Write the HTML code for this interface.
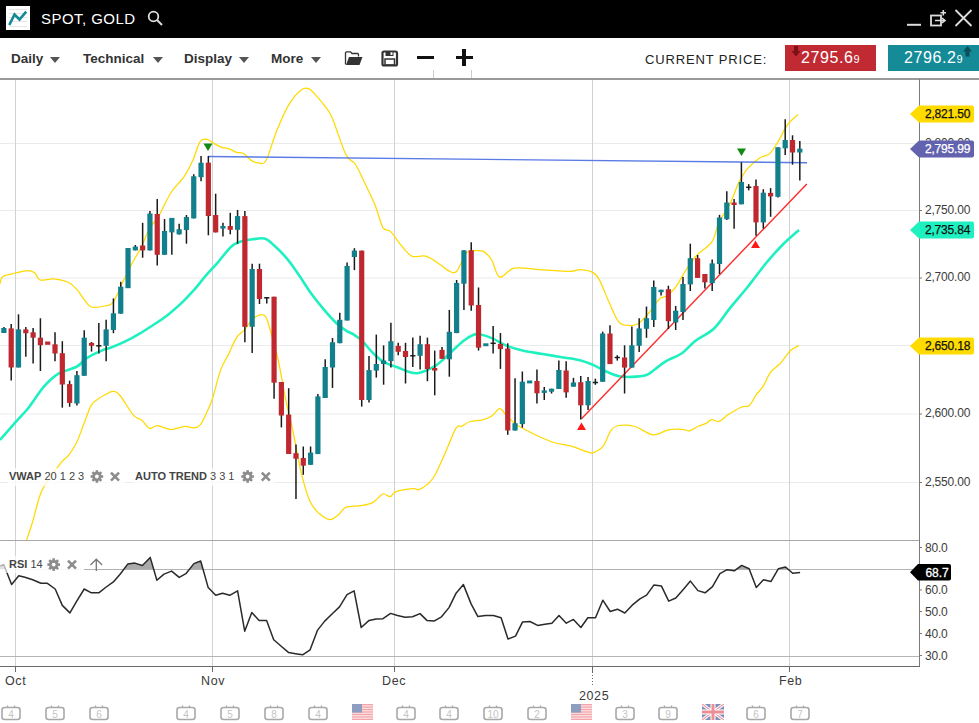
<!DOCTYPE html>
<html><head><meta charset="utf-8">
<style>
html,body{margin:0;padding:0;}
body{width:979px;height:723px;overflow:hidden;position:relative;background:#fff;font-family:"Liberation Sans", sans-serif;}
#title{position:absolute;left:0;top:0;width:979px;height:37.6px;background:#000;}
#logo{position:absolute;left:6px;top:6px;width:24px;height:24px;background:#fff;}
#ttl{position:absolute;left:41px;top:11px;color:#fff;font-size:15px;letter-spacing:0.45px;line-height:16px;white-space:nowrap;}
.tb{position:absolute;top:50px;font-size:13.5px;font-weight:bold;color:#333;line-height:18px;white-space:nowrap;}
.tri{position:absolute;top:56.5px;width:0;height:0;border-left:5.5px solid transparent;border-right:5.5px solid transparent;border-top:6px solid #555;}
#cp{position:absolute;left:645px;top:52px;font-size:13px;letter-spacing:0.85px;color:#222;line-height:16px;white-space:nowrap;}
.pbox{position:absolute;top:45px;height:26px;}
.ptxt{position:absolute;top:48px;font-size:16px;letter-spacing:0.6px;color:#fff;line-height:20px;white-space:nowrap;}
.al{position:absolute;left:925px;font-size:12px;letter-spacing:-0.2px;color:#3c3c3c;line-height:14px;white-space:nowrap;}
.tag{position:absolute;left:910px;}
.tagt{position:absolute;left:925px;font-size:12px;letter-spacing:-0.2px;line-height:16px;-webkit-text-stroke:0.25px currentColor;white-space:nowrap;}
.cal,.flag{position:absolute;}
.dl{position:absolute;top:673px;font-size:12.5px;letter-spacing:0.6px;color:#3a3a3a;line-height:16px;white-space:nowrap;}
.lbl{position:absolute;font-size:11px;color:#444;line-height:14px;white-space:nowrap;}
</style></head><body>
<div id="title">
  <div id="logo"><svg width="24" height="24"><g stroke="#e6e6e6" stroke-width="1"><line x1="3" y1="3.5" x2="21" y2="3.5"/><line x1="3" y1="7.5" x2="21" y2="7.5"/><line x1="3" y1="11.5" x2="21" y2="11.5"/><line x1="3" y1="15.5" x2="21" y2="15.5"/><line x1="3" y1="20.5" x2="21" y2="20.5"/></g><polyline points="3.3,19 8.5,8.5 13.5,13.5 20.2,5.6" fill="none" stroke="#138a96" stroke-width="2.6"/></svg></div>
  <div id="ttl">SPOT, GOLD</div>
  <svg style="position:absolute;left:147px;top:10px" width="17" height="17"><circle cx="6.5" cy="6.5" r="4.8" fill="none" stroke="#ddd" stroke-width="1.8"/><line x1="10" y1="10" x2="15" y2="15" stroke="#ddd" stroke-width="2"/></svg>
  <svg style="position:absolute;left:900px;top:5px" width="79" height="27"><line x1="7" y1="19.8" x2="21" y2="19.8" stroke="#ddd" stroke-width="2"/><rect x="31" y="10.5" width="10" height="10" fill="none" stroke="#ddd" stroke-width="1.8"/><path d="M35,15.5 H44 M42,13 L45,15.5 L42,18" fill="none" stroke="#ddd" stroke-width="1.6"/><path d="M43.3,5 V10.5 M40.5,7.7 H46" stroke="#ddd" stroke-width="1.6"/><path d="M55.5,5 L71.5,21 M71.5,5 L55.5,21" stroke="#ddd" stroke-width="1.8"/></svg>
</div>
<div class="tb" style="left:11px">Daily</div><div class="tri" style="left:50px"></div>
<div class="tb" style="left:83px">Technical</div><div class="tri" style="left:153px"></div>
<div class="tb" style="left:184px">Display</div><div class="tri" style="left:239px"></div>
<div class="tb" style="left:271px">More</div><div class="tri" style="left:311px"></div>
<svg style="position:absolute;left:344px;top:50px" width="20" height="17"><path d="M1.5,14.5 L1.5,3 Q1.5,1.8 2.7,1.8 L6.5,1.8 L8,3.5 L13.5,3.5 Q14.5,3.5 14.5,4.5 L14.5,6.5" fill="none" stroke="#333" stroke-width="1.3"/><path d="M2,15 L5,7 L18.5,7 L15.5,15 Z" fill="#333"/></svg>
<svg style="position:absolute;left:381px;top:50px" width="18" height="17"><rect x="1.5" y="1.5" width="14.5" height="14" rx="1.5" fill="none" stroke="#333" stroke-width="2.2"/><rect x="4.5" y="1.5" width="8" height="4.5" fill="#333"/><rect x="9.5" y="2.3" width="2" height="2.6" fill="#fff"/><rect x="4" y="9" width="9.5" height="6" fill="none" stroke="#333" stroke-width="1.5"/></svg>
<div style="position:absolute;left:417px;top:55.5px;width:16.5px;height:3.8px;background:#111"></div>
<div style="position:absolute;left:456px;top:55.5px;width:16.5px;height:3.8px;background:#111"></div>
<div style="position:absolute;left:462.3px;top:49px;width:3.8px;height:16.8px;background:#111"></div>
<div id="cp">CURRENT PRICE:</div>
<div class="pbox" style="left:785px;width:91px;background:#c12a33"></div>
<svg style="position:absolute;left:791px;top:46px" width="10" height="11"><path d="M3,0 H7 V5 H9.5 L5,10.5 L0.5,5 H3 Z" fill="#7d1016"/></svg>
<div class="ptxt" style="left:801px">2795.6<span style="font-size:11px">9</span></div>
<div class="pbox" style="left:888px;width:91px;background:#148b97"></div>
<svg style="position:absolute;left:962px;top:46px" width="11" height="11"><path d="M3.5,10.5 H7.5 V5.5 H10 L5.5,0 L1,5.5 H3.5 Z" fill="#0a5058"/></svg>
<div class="ptxt" style="left:904px">2796.2<span style="font-size:11px">9</span></div>
<div style="position:absolute;left:433px;top:70px;width:1px;height:8px;background:#ccc"></div>
<div style="position:absolute;left:471px;top:70px;width:1px;height:8px;background:#ccc"></div>
<svg style="position:absolute;left:0;top:0" width="979" height="723">
<defs><clipPath id="mainclip"><rect x="0" y="79" width="919" height="461"/></clipPath></defs>
<line x1="0" y1="143.5" x2="919" y2="143.5" stroke="#ebebeb" stroke-width="1"/>
<line x1="0" y1="210.5" x2="919" y2="210.5" stroke="#ebebeb" stroke-width="1"/>
<line x1="0" y1="278" x2="919" y2="278" stroke="#ebebeb" stroke-width="1"/>
<line x1="0" y1="345.5" x2="919" y2="345.5" stroke="#ebebeb" stroke-width="1"/>
<line x1="0" y1="414" x2="919" y2="414" stroke="#ebebeb" stroke-width="1"/>
<line x1="0" y1="482.5" x2="919" y2="482.5" stroke="#ebebeb" stroke-width="1"/>
<line x1="15.5" y1="79" x2="15.5" y2="666" stroke="#d2d2d2" stroke-width="1"/>
<line x1="212.5" y1="79" x2="212.5" y2="666" stroke="#d2d2d2" stroke-width="1"/>
<line x1="394.5" y1="79" x2="394.5" y2="666" stroke="#d2d2d2" stroke-width="1"/>
<line x1="592.5" y1="79" x2="592.5" y2="666" stroke="#d2d2d2" stroke-width="1"/>
<line x1="789.5" y1="79" x2="789.5" y2="666" stroke="#d2d2d2" stroke-width="1"/>
<g clip-path="url(#mainclip)">
<path d="M0.0,283.7 C0.5,282.5 0.2,278.3 2.9,276.5 C5.6,274.7 11.9,274.0 16.0,273.0 C20.1,272.0 24.5,270.7 27.6,270.7 C30.8,270.7 32.8,271.4 34.9,273.0 C37.0,274.6 36.9,279.0 40.0,280.0 C43.1,281.0 49.0,278.4 53.7,278.8 C58.4,279.2 64.4,280.5 68.3,282.3 C72.2,284.1 74.3,286.7 77.0,289.6 C79.7,292.5 81.9,296.8 84.3,299.7 C86.7,302.6 88.1,305.9 91.5,307.0 C94.9,308.1 101.0,306.8 104.6,306.0 C108.2,305.2 110.1,306.3 113.3,302.0 C116.5,297.7 120.4,286.7 123.5,280.4 C126.6,274.1 128.8,269.5 131.7,264.0 C134.6,258.5 138.1,253.4 141.1,247.5 C144.1,241.6 146.4,234.0 149.4,228.7 C152.4,223.4 155.3,221.7 158.8,215.8 C162.3,209.9 166.2,200.2 170.5,193.5 C174.8,186.8 180.9,181.3 184.6,175.8 C188.3,170.3 190.2,166.3 192.8,160.6 C195.4,154.9 197.6,145.3 199.9,141.8 C202.2,138.3 204.4,139.0 206.9,139.4 C209.4,139.8 212.6,142.7 215.2,144.1 C217.8,145.5 219.8,146.8 222.2,147.6 C224.5,148.4 227.0,148.0 229.3,148.8 C231.7,149.6 234.0,151.5 236.3,152.3 C238.7,153.1 240.9,152.1 243.4,153.5 C245.9,154.9 249.1,159.0 251.6,160.6 C254.1,162.2 256.2,162.9 258.6,162.9 C261.0,162.9 263.1,165.8 266.1,160.3 C269.2,154.9 273.0,139.6 276.9,130.2 C280.8,120.8 285.1,110.8 289.2,104.1 C293.3,97.3 298.2,92.2 301.5,89.7 C304.8,87.2 306.6,87.7 309.2,88.8 C311.8,89.9 314.2,93.6 316.8,96.4 C319.4,99.2 321.9,102.0 324.5,105.6 C327.1,109.2 328.6,109.7 332.2,117.9 C335.8,126.1 342.2,147.1 346.0,154.8 C349.8,162.5 352.1,159.4 355.2,164.0 C358.3,168.6 361.2,175.6 364.5,182.5 C367.8,189.4 372.1,198.0 375.2,205.5 C378.3,213.0 380.3,223.2 382.9,227.6 C385.5,231.9 387.5,228.6 390.6,231.6 C393.7,234.6 397.7,241.3 401.3,245.4 C404.9,249.5 408.0,254.4 412.1,256.2 C416.2,258.0 421.0,254.7 425.9,256.2 C430.8,257.7 437.5,262.9 441.3,265.4 C445.1,267.8 446.3,269.9 448.9,270.9 C451.4,271.9 453.7,274.5 456.6,271.5 C459.5,268.5 463.2,256.4 466.4,252.9 C469.6,249.4 473.0,250.9 475.9,250.7 C478.8,250.5 481.1,250.0 483.8,251.6 C486.5,253.2 489.2,255.9 491.8,260.2 C494.4,264.4 496.0,275.8 499.7,277.1 C503.4,278.4 507.5,269.4 514.1,268.2 C520.7,267.0 532.6,269.3 539.5,269.7 C546.4,270.1 550.1,270.4 555.4,270.7 C560.7,271.0 567.1,271.5 571.3,271.3 C575.5,271.1 577.1,269.4 580.8,269.7 C584.5,270.0 590.3,271.0 593.5,272.9 C596.7,274.8 597.2,275.9 599.9,280.9 C602.5,285.9 606.2,296.2 609.4,303.1 C612.6,310.0 615.8,318.5 619.0,322.2 C622.2,325.9 625.3,325.1 628.5,325.4 C631.7,325.7 634.8,325.6 638.0,323.8 C641.2,322.0 644.9,317.2 647.6,314.3 C650.3,311.4 651.9,309.0 654.0,306.3 C656.1,303.6 657.8,300.1 660.0,298.4 C662.2,296.6 664.4,297.7 667.0,295.8 C669.6,293.9 672.6,291.3 675.9,286.8 C679.2,282.3 683.1,274.3 686.7,268.9 C690.3,263.5 693.3,259.0 697.5,254.5 C701.7,250.0 708.3,247.3 711.9,241.9 C715.5,236.5 716.0,228.5 719.0,222.2 C722.0,215.9 726.5,210.8 729.8,204.2 C733.1,197.6 735.8,188.6 738.8,182.6 C741.8,176.6 744.2,172.5 747.8,168.3 C751.4,164.1 756.8,159.9 760.4,157.5 C764.0,155.1 766.4,156.6 769.4,153.9 C772.4,151.2 775.3,146.1 778.3,141.3 C781.3,136.5 784.0,129.7 787.3,125.2 C790.6,120.7 796.3,116.2 798.1,114.4" fill="none" stroke="#ffd900" stroke-width="1.25" stroke-linejoin="round"/>
<path d="M26.3,541.0 C27.2,538.1 29.7,531.4 32.0,523.8 C34.3,516.2 37.7,501.9 40.0,495.3 C42.3,488.7 42.3,489.2 45.7,483.9 C49.1,478.6 56.7,468.1 60.5,463.3 C64.3,458.5 65.8,458.7 68.5,455.3 C71.2,451.9 73.8,448.3 76.5,442.8 C79.2,437.3 82.0,428.5 84.5,422.2 C87.0,415.9 88.9,409.1 91.3,405.1 C93.7,401.2 96.5,400.2 98.8,398.5 C101.1,396.8 102.6,396.0 105.0,394.8 C107.4,393.6 110.5,391.3 113.0,391.4 C115.5,391.5 116.6,391.5 120.0,395.5 C123.4,399.5 130.0,411.3 133.6,415.4 C137.2,419.5 138.9,417.8 141.6,420.0 C144.2,422.2 146.8,427.4 149.5,428.4 C152.2,429.3 153.9,425.5 157.5,425.7 C161.1,425.9 166.6,429.4 171.2,429.5 C175.8,429.6 181.4,426.6 185.0,426.3 C188.6,426.0 190.5,428.1 193.0,427.9 C195.5,427.7 197.6,427.9 200.0,425.2 C202.4,422.5 205.0,416.2 207.2,411.5 C209.3,406.8 210.7,404.0 212.9,397.2 C215.1,390.4 217.9,377.6 220.4,370.6 C222.9,363.6 225.3,360.8 228.0,355.4 C230.7,349.9 233.7,342.1 236.4,337.9 C239.1,333.7 241.3,333.3 244.0,330.3 C246.7,327.3 249.9,322.2 252.4,319.7 C254.9,317.2 256.9,315.5 259.2,315.1 C261.5,314.7 263.9,313.4 266.0,317.1 C268.1,320.8 270.1,330.0 272.1,337.1 C274.1,344.2 275.9,349.5 278.2,360.0 C280.5,370.5 283.3,388.1 285.8,400.0 C288.3,411.9 290.4,419.1 293.0,431.5 C295.6,443.9 298.8,462.7 301.6,474.4 C304.5,486.1 307.2,495.2 310.1,501.6 C313.0,508.0 315.4,510.0 318.7,513.0 C322.0,516.0 326.9,519.4 330.2,519.6 C333.5,519.8 336.1,516.4 338.7,514.4 C341.3,512.4 342.5,508.7 345.9,507.3 C349.2,505.9 354.8,506.5 358.8,505.9 C362.9,505.3 367.4,504.6 370.2,503.6 C373.0,502.6 373.8,501.7 375.9,500.1 C378.0,498.5 380.7,494.4 383.1,493.8 C385.5,493.2 388.1,497.1 390.2,496.7 C392.3,496.3 392.2,492.9 396.0,491.6 C399.8,490.3 409.3,489.0 413.1,488.7 C416.9,488.4 416.4,490.3 418.8,489.6 C421.2,488.9 424.8,486.7 427.4,484.4 C430.0,482.1 431.7,480.8 434.6,475.8 C437.5,470.8 441.0,462.3 444.6,454.4 C448.2,446.4 453.1,432.8 456.0,428.1 C458.9,423.4 459.4,427.4 461.7,426.3 C464.0,425.2 466.6,422.6 470.0,421.5 C473.4,420.4 478.7,420.7 482.3,419.8 C485.9,418.9 488.9,417.9 491.8,416.0 C494.7,414.1 497.3,408.8 499.7,408.7 C502.1,408.6 503.5,412.6 506.1,415.1 C508.8,417.7 512.7,421.7 515.6,424.0 C518.5,426.3 519.6,426.6 523.6,428.7 C527.6,430.8 534.2,434.3 539.5,436.7 C544.8,439.1 550.1,441.4 555.4,443.0 C560.7,444.6 566.0,444.7 571.3,446.2 C576.6,447.7 583.5,450.8 587.2,451.9 C590.9,453.0 590.9,453.6 593.5,452.6 C596.1,451.7 600.2,449.9 603.1,446.2 C606.0,442.5 608.4,433.8 611.0,430.3 C613.6,426.9 615.0,426.1 619.0,425.5 C623.0,424.9 629.2,424.9 634.9,426.5 C640.5,428.1 647.3,434.2 652.9,434.8 C658.5,435.4 663.6,430.7 668.5,429.8 C673.4,428.9 678.8,429.1 682.3,429.3 C685.8,429.5 686.9,431.4 689.6,430.8 C692.4,430.2 696.0,427.2 698.8,426.0 C701.6,424.8 704.1,424.4 706.2,423.4 C708.4,422.3 709.6,420.0 711.7,419.7 C713.9,419.4 716.3,422.2 719.1,421.4 C721.9,420.5 724.6,417.0 728.3,414.6 C732.0,412.2 737.6,408.7 741.1,407.2 C744.6,405.7 747.0,407.4 749.4,405.4 C751.8,403.4 753.5,398.5 755.8,395.3 C758.1,392.1 760.8,389.9 763.2,386.1 C765.7,382.3 767.6,376.1 770.5,372.3 C773.4,368.5 777.2,366.8 780.6,363.1 C784.0,359.4 787.7,353.1 790.8,350.2 C793.9,347.3 797.6,346.4 799.0,345.6" fill="none" stroke="#ffd900" stroke-width="1.25" stroke-linejoin="round"/>
<path d="M0.0,440.0 C2.7,436.9 11.2,427.2 16.0,421.7 C20.8,416.2 24.4,413.0 29.0,407.2 C33.6,401.4 38.8,392.5 43.6,386.9 C48.5,381.3 52.5,377.2 58.1,373.8 C63.7,370.4 72.2,369.2 77.0,366.5 C81.8,363.8 83.1,360.4 87.2,357.8 C91.3,355.2 97.7,352.3 101.7,350.6 C105.7,348.9 107.1,349.0 111.1,347.5 C115.0,346.0 120.8,343.6 125.4,341.4 C130.0,339.2 134.4,336.7 138.7,334.2 C142.9,331.7 146.3,329.5 150.9,326.5 C155.5,323.5 161.1,320.1 166.4,316.0 C171.8,311.9 178.4,305.9 183.0,301.6 C187.6,297.3 190.2,294.3 194.0,290.0 C197.8,285.7 201.9,280.2 205.8,275.7 C209.7,271.2 213.2,267.7 217.5,262.8 C221.8,257.9 227.7,249.8 231.6,246.3 C235.5,242.8 237.5,242.8 241.0,241.6 C244.5,240.4 248.9,239.8 252.8,239.3 C256.7,238.8 261.0,237.6 264.5,238.6 C268.0,239.6 270.0,241.8 273.9,245.2 C277.8,248.6 283.6,254.6 287.6,259.3 C291.6,264.0 293.8,267.7 297.7,273.3 C301.6,278.9 306.6,287.1 311.0,293.2 C315.4,299.3 319.8,304.6 324.2,309.8 C328.6,315.0 333.8,320.7 337.5,324.2 C341.2,327.7 343.8,329.1 346.4,330.8 C349.0,332.5 350.4,332.4 353.0,334.1 C355.6,335.8 358.6,337.7 361.9,340.8 C365.2,343.9 369.2,349.3 372.9,352.9 C376.6,356.5 379.9,359.8 384.0,362.2 C388.1,364.6 393.2,365.7 397.3,367.3 C401.4,368.9 405.0,370.7 408.3,371.7 C411.6,372.7 414.2,373.5 417.2,373.3 C420.1,373.1 423.1,371.8 426.0,370.6 C428.9,369.4 431.9,368.1 434.9,366.2 C437.8,364.3 440.8,361.7 443.7,359.1 C446.6,356.5 449.3,353.8 452.6,350.7 C455.9,347.6 460.3,343.4 463.6,340.8 C466.9,338.2 469.9,336.3 472.5,335.2 C475.1,334.1 475.9,333.8 479.1,334.3 C482.3,334.8 487.0,336.1 491.8,338.1 C496.6,340.1 502.4,344.0 507.7,346.1 C513.0,348.2 517.8,349.5 523.6,350.8 C529.4,352.1 536.3,352.9 542.7,354.0 C549.1,355.1 555.4,356.1 561.8,357.2 C568.1,358.3 575.5,359.1 580.8,360.4 C586.1,361.7 589.2,363.2 593.5,365.1 C597.8,367.0 602.0,369.6 606.3,371.5 C610.5,373.4 614.8,375.4 619.0,376.3 C623.2,377.2 627.1,377.1 631.7,376.9 C636.3,376.7 642.6,376.2 646.4,375.0 C650.2,373.8 651.5,371.8 654.7,369.5 C657.9,367.2 661.1,364.1 665.7,361.3 C670.3,358.6 677.4,356.4 682.3,353.0 C687.2,349.6 690.0,345.0 695.2,341.0 C700.4,337.0 707.7,334.4 713.5,329.0 C719.3,323.6 724.1,315.4 729.8,308.4 C735.5,301.4 741.8,294.3 747.8,286.8 C753.8,279.3 760.1,270.4 765.8,263.5 C771.5,256.6 776.4,251.1 781.9,245.5 C787.4,239.9 796.1,232.6 799.0,230.0" fill="none" stroke="#1ef0c0" stroke-width="2.6" stroke-linejoin="round"/>
<line x1="208" y1="156.5" x2="807" y2="162.7" stroke="#5a7be6" stroke-width="1.4"/>
<line x1="581.5" y1="418.7" x2="806.8" y2="184" stroke="#ff2a2a" stroke-width="1.4"/>
<line x1="3.90" y1="327" x2="3.90" y2="333" stroke="#1a1a1a" stroke-width="1.5"/>
<rect x="1.30" y="328" width="5.2" height="5.0" fill="#117f8c"/>
<line x1="11.20" y1="324" x2="11.20" y2="380.6" stroke="#1a1a1a" stroke-width="1.5"/>
<rect x="8.60" y="328.4" width="5.2" height="39.1" fill="#c0282f"/>
<line x1="18.50" y1="314.3" x2="18.50" y2="367.5" stroke="#1a1a1a" stroke-width="1.5"/>
<rect x="15.90" y="329.4" width="5.2" height="38.1" fill="#117f8c"/>
<line x1="25.81" y1="327" x2="25.81" y2="356.8" stroke="#1a1a1a" stroke-width="1.5"/>
<rect x="23.21" y="329.4" width="5.2" height="3.8" fill="#c0282f"/>
<line x1="33.11" y1="328" x2="33.11" y2="363.6" stroke="#1a1a1a" stroke-width="1.5"/>
<rect x="30.51" y="332.3" width="5.2" height="5.4" fill="#c0282f"/>
<line x1="40.41" y1="318.3" x2="40.41" y2="371" stroke="#1a1a1a" stroke-width="1.5"/>
<rect x="37.81" y="337.7" width="5.2" height="7.5" fill="#c0282f"/>
<rect x="45.11" y="341.5" width="5.2" height="3.3" fill="#c0282f"/>
<line x1="55.01" y1="332.3" x2="55.01" y2="361.3" stroke="#1a1a1a" stroke-width="1.5"/>
<rect x="52.41" y="344.3" width="5.2" height="9.2" fill="#c0282f"/>
<line x1="62.32" y1="341.2" x2="62.32" y2="407.7" stroke="#1a1a1a" stroke-width="1.5"/>
<rect x="59.72" y="353.2" width="5.2" height="31.3" fill="#c0282f"/>
<line x1="69.62" y1="380.6" x2="69.62" y2="406.8" stroke="#1a1a1a" stroke-width="1.5"/>
<rect x="67.02" y="384.1" width="5.2" height="18.8" fill="#c0282f"/>
<line x1="76.92" y1="371" x2="76.92" y2="405.4" stroke="#1a1a1a" stroke-width="1.5"/>
<rect x="74.32" y="375.2" width="5.2" height="28.3" fill="#117f8c"/>
<line x1="84.22" y1="330.3" x2="84.22" y2="375.8" stroke="#1a1a1a" stroke-width="1.5"/>
<rect x="81.62" y="337.7" width="5.2" height="38.1" fill="#117f8c"/>
<line x1="91.52" y1="342" x2="91.52" y2="351.6" stroke="#1a1a1a" stroke-width="1.5"/>
<rect x="88.92" y="342.9" width="5.2" height="2.9" fill="#c0282f"/>
<line x1="98.83" y1="323" x2="98.83" y2="353.5" stroke="#1a1a1a" stroke-width="1.5"/>
<line x1="96.23" y1="345.8" x2="101.43" y2="345.8" stroke="#1a1a1a" stroke-width="1.5"/>
<line x1="106.13" y1="319.7" x2="106.13" y2="361.3" stroke="#1a1a1a" stroke-width="1.5"/>
<rect x="103.53" y="329.4" width="5.2" height="16.4" fill="#117f8c"/>
<line x1="113.43" y1="298.4" x2="113.43" y2="333.2" stroke="#1a1a1a" stroke-width="1.5"/>
<rect x="110.83" y="313.3" width="5.2" height="16.7" fill="#117f8c"/>
<line x1="120.73" y1="281.8" x2="120.73" y2="313.7" stroke="#1a1a1a" stroke-width="1.5"/>
<rect x="118.13" y="286.7" width="5.2" height="27.0" fill="#117f8c"/>
<rect x="125.43" y="248" width="5.2" height="40.2" fill="#117f8c"/>
<line x1="135.34" y1="245" x2="135.34" y2="250.4" stroke="#1a1a1a" stroke-width="1.5"/>
<rect x="132.74" y="246.6" width="5.2" height="3.8" fill="#117f8c"/>
<line x1="142.64" y1="222.8" x2="142.64" y2="257.7" stroke="#1a1a1a" stroke-width="1.5"/>
<rect x="140.04" y="245.5" width="5.2" height="4.9" fill="#c0282f"/>
<line x1="149.94" y1="211" x2="149.94" y2="250.4" stroke="#1a1a1a" stroke-width="1.5"/>
<rect x="147.34" y="213.5" width="5.2" height="36.9" fill="#117f8c"/>
<line x1="157.24" y1="199" x2="157.24" y2="265.5" stroke="#1a1a1a" stroke-width="1.5"/>
<rect x="154.64" y="214" width="5.2" height="40.8" fill="#c0282f"/>
<line x1="164.54" y1="219" x2="164.54" y2="254.8" stroke="#1a1a1a" stroke-width="1.5"/>
<rect x="161.94" y="231" width="5.2" height="23.8" fill="#117f8c"/>
<line x1="171.85" y1="217.9" x2="171.85" y2="254.8" stroke="#1a1a1a" stroke-width="1.5"/>
<rect x="169.25" y="217.9" width="5.2" height="14.5" fill="#117f8c"/>
<line x1="179.15" y1="223.7" x2="179.15" y2="234.4" stroke="#1a1a1a" stroke-width="1.5"/>
<rect x="176.55" y="229.2" width="5.2" height="5.2" fill="#117f8c"/>
<line x1="186.45" y1="215" x2="186.45" y2="243.7" stroke="#1a1a1a" stroke-width="1.5"/>
<rect x="183.85" y="217" width="5.2" height="13.0" fill="#117f8c"/>
<line x1="193.75" y1="174.3" x2="193.75" y2="218.4" stroke="#1a1a1a" stroke-width="1.5"/>
<rect x="191.15" y="176.3" width="5.2" height="42.1" fill="#117f8c"/>
<line x1="201.05" y1="156" x2="201.05" y2="181.3" stroke="#1a1a1a" stroke-width="1.5"/>
<rect x="198.45" y="162.7" width="5.2" height="14.5" fill="#117f8c"/>
<line x1="208.36" y1="156" x2="208.36" y2="235.3" stroke="#1a1a1a" stroke-width="1.5"/>
<rect x="205.76" y="162.7" width="5.2" height="53.3" fill="#c0282f"/>
<line x1="215.66" y1="193.7" x2="215.66" y2="232.4" stroke="#1a1a1a" stroke-width="1.5"/>
<rect x="213.06" y="215" width="5.2" height="17.4" fill="#c0282f"/>
<line x1="222.96" y1="222.8" x2="222.96" y2="236.5" stroke="#1a1a1a" stroke-width="1.5"/>
<rect x="220.36" y="226" width="5.2" height="2.6" fill="#117f8c"/>
<line x1="230.26" y1="212.8" x2="230.26" y2="234.3" stroke="#1a1a1a" stroke-width="1.5"/>
<rect x="227.66" y="226" width="5.2" height="3.8" fill="#c0282f"/>
<line x1="237.56" y1="210" x2="237.56" y2="243.8" stroke="#1a1a1a" stroke-width="1.5"/>
<rect x="234.96" y="216.1" width="5.2" height="13.7" fill="#117f8c"/>
<line x1="244.87" y1="211" x2="244.87" y2="342.3" stroke="#1a1a1a" stroke-width="1.5"/>
<rect x="242.27" y="216.1" width="5.2" height="110.7" fill="#c0282f"/>
<line x1="252.17" y1="263.7" x2="252.17" y2="353" stroke="#1a1a1a" stroke-width="1.5"/>
<rect x="249.57" y="269" width="5.2" height="57.8" fill="#117f8c"/>
<line x1="259.47" y1="263.7" x2="259.47" y2="304" stroke="#1a1a1a" stroke-width="1.5"/>
<rect x="256.87" y="269" width="5.2" height="30.0" fill="#c0282f"/>
<line x1="266.77" y1="297.4" x2="266.77" y2="303.4" stroke="#1a1a1a" stroke-width="1.5"/>
<line x1="264.17" y1="297.8" x2="269.37" y2="297.8" stroke="#1a1a1a" stroke-width="1.5"/>
<line x1="274.07" y1="296.7" x2="274.07" y2="398.8" stroke="#1a1a1a" stroke-width="1.5"/>
<rect x="271.47" y="296.7" width="5.2" height="86.0" fill="#c0282f"/>
<line x1="281.38" y1="382" x2="281.38" y2="427.4" stroke="#1a1a1a" stroke-width="1.5"/>
<rect x="278.78" y="382" width="5.2" height="33.5" fill="#c0282f"/>
<line x1="288.68" y1="388.2" x2="288.68" y2="454" stroke="#1a1a1a" stroke-width="1.5"/>
<rect x="286.08" y="414.6" width="5.2" height="39.4" fill="#c0282f"/>
<line x1="295.98" y1="444.4" x2="295.98" y2="499.1" stroke="#1a1a1a" stroke-width="1.5"/>
<rect x="293.38" y="453.2" width="5.2" height="5.5" fill="#c0282f"/>
<line x1="303.28" y1="446.5" x2="303.28" y2="474.8" stroke="#1a1a1a" stroke-width="1.5"/>
<rect x="300.68" y="458" width="5.2" height="7.7" fill="#c0282f"/>
<line x1="310.58" y1="446.5" x2="310.58" y2="464.8" stroke="#1a1a1a" stroke-width="1.5"/>
<rect x="307.98" y="452.6" width="5.2" height="12.2" fill="#117f8c"/>
<line x1="317.89" y1="394" x2="317.89" y2="454.1" stroke="#1a1a1a" stroke-width="1.5"/>
<rect x="315.29" y="396.4" width="5.2" height="57.7" fill="#117f8c"/>
<line x1="325.19" y1="359.3" x2="325.19" y2="398" stroke="#1a1a1a" stroke-width="1.5"/>
<rect x="322.59" y="367" width="5.2" height="31.0" fill="#117f8c"/>
<line x1="332.49" y1="338" x2="332.49" y2="387.9" stroke="#1a1a1a" stroke-width="1.5"/>
<rect x="329.89" y="342.3" width="5.2" height="25.2" fill="#117f8c"/>
<line x1="339.79" y1="312.8" x2="339.79" y2="343.2" stroke="#1a1a1a" stroke-width="1.5"/>
<rect x="337.19" y="319.8" width="5.2" height="23.4" fill="#117f8c"/>
<line x1="347.09" y1="262.4" x2="347.09" y2="320.5" stroke="#1a1a1a" stroke-width="1.5"/>
<rect x="344.49" y="265.9" width="5.2" height="54.6" fill="#117f8c"/>
<line x1="354.40" y1="248.2" x2="354.40" y2="270.1" stroke="#1a1a1a" stroke-width="1.5"/>
<rect x="351.80" y="250.6" width="5.2" height="6.4" fill="#117f8c"/>
<line x1="361.70" y1="250.6" x2="361.70" y2="406.6" stroke="#1a1a1a" stroke-width="1.5"/>
<rect x="359.10" y="250.6" width="5.2" height="149.4" fill="#c0282f"/>
<line x1="369.00" y1="356" x2="369.00" y2="402.4" stroke="#1a1a1a" stroke-width="1.5"/>
<rect x="366.40" y="370.1" width="5.2" height="29.9" fill="#117f8c"/>
<line x1="376.30" y1="334.6" x2="376.30" y2="377.6" stroke="#1a1a1a" stroke-width="1.5"/>
<rect x="373.70" y="364" width="5.2" height="6.6" fill="#117f8c"/>
<line x1="383.60" y1="345.4" x2="383.60" y2="384.7" stroke="#1a1a1a" stroke-width="1.5"/>
<rect x="381.00" y="360.5" width="5.2" height="3.5" fill="#117f8c"/>
<line x1="390.91" y1="322.8" x2="390.91" y2="367.5" stroke="#1a1a1a" stroke-width="1.5"/>
<rect x="388.31" y="341.2" width="5.2" height="20.0" fill="#117f8c"/>
<line x1="398.21" y1="342.8" x2="398.21" y2="355.3" stroke="#1a1a1a" stroke-width="1.5"/>
<rect x="395.61" y="345.9" width="5.2" height="5.9" fill="#c0282f"/>
<line x1="405.51" y1="342.8" x2="405.51" y2="383.5" stroke="#1a1a1a" stroke-width="1.5"/>
<rect x="402.91" y="351" width="5.2" height="6.0" fill="#c0282f"/>
<line x1="412.81" y1="337.6" x2="412.81" y2="367" stroke="#1a1a1a" stroke-width="1.5"/>
<line x1="410.21" y1="355.8" x2="415.41" y2="355.8" stroke="#1a1a1a" stroke-width="1.5"/>
<line x1="420.11" y1="335.8" x2="420.11" y2="369.4" stroke="#1a1a1a" stroke-width="1.5"/>
<rect x="417.51" y="344.2" width="5.2" height="11.6" fill="#117f8c"/>
<line x1="427.42" y1="337.6" x2="427.42" y2="381.2" stroke="#1a1a1a" stroke-width="1.5"/>
<rect x="424.82" y="344.2" width="5.2" height="24.8" fill="#c0282f"/>
<line x1="434.72" y1="350.6" x2="434.72" y2="395.3" stroke="#1a1a1a" stroke-width="1.5"/>
<rect x="432.12" y="368" width="5.2" height="2.6" fill="#c0282f"/>
<line x1="442.02" y1="347" x2="442.02" y2="358.8" stroke="#1a1a1a" stroke-width="1.5"/>
<rect x="439.42" y="349.9" width="5.2" height="8.9" fill="#c0282f"/>
<line x1="449.32" y1="309.9" x2="449.32" y2="376.7" stroke="#1a1a1a" stroke-width="1.5"/>
<rect x="446.72" y="331.8" width="5.2" height="27.5" fill="#117f8c"/>
<line x1="456.62" y1="280" x2="456.62" y2="333.1" stroke="#1a1a1a" stroke-width="1.5"/>
<rect x="454.02" y="282.9" width="5.2" height="50.2" fill="#117f8c"/>
<line x1="463.93" y1="250.3" x2="463.93" y2="309.9" stroke="#1a1a1a" stroke-width="1.5"/>
<rect x="461.33" y="250.3" width="5.2" height="33.4" fill="#117f8c"/>
<line x1="471.23" y1="242.2" x2="471.23" y2="310.8" stroke="#1a1a1a" stroke-width="1.5"/>
<rect x="468.63" y="250.3" width="5.2" height="55.2" fill="#c0282f"/>
<line x1="478.53" y1="287.5" x2="478.53" y2="350.6" stroke="#1a1a1a" stroke-width="1.5"/>
<rect x="475.93" y="305" width="5.2" height="42.7" fill="#c0282f"/>
<rect x="483.23" y="343.3" width="5.2" height="2.9" fill="#117f8c"/>
<line x1="493.13" y1="325.9" x2="493.13" y2="353.5" stroke="#1a1a1a" stroke-width="1.5"/>
<line x1="490.53" y1="343.3" x2="495.73" y2="343.3" stroke="#1a1a1a" stroke-width="1.5"/>
<line x1="500.44" y1="333" x2="500.44" y2="368.9" stroke="#1a1a1a" stroke-width="1.5"/>
<rect x="497.84" y="343.9" width="5.2" height="5.2" fill="#c0282f"/>
<line x1="507.74" y1="343.3" x2="507.74" y2="434.8" stroke="#1a1a1a" stroke-width="1.5"/>
<rect x="505.14" y="348.5" width="5.2" height="82.0" fill="#c0282f"/>
<line x1="515.04" y1="378.2" x2="515.04" y2="430.5" stroke="#1a1a1a" stroke-width="1.5"/>
<rect x="512.44" y="423.2" width="5.2" height="7.3" fill="#117f8c"/>
<line x1="522.34" y1="371.5" x2="522.34" y2="427.6" stroke="#1a1a1a" stroke-width="1.5"/>
<rect x="519.74" y="381.7" width="5.2" height="42.4" fill="#117f8c"/>
<rect x="527.04" y="380.5" width="5.2" height="2.9" fill="#117f8c"/>
<line x1="536.95" y1="369.5" x2="536.95" y2="403.4" stroke="#1a1a1a" stroke-width="1.5"/>
<rect x="534.35" y="381" width="5.2" height="12.3" fill="#c0282f"/>
<line x1="544.25" y1="386.9" x2="544.25" y2="400" stroke="#1a1a1a" stroke-width="1.5"/>
<rect x="541.65" y="390.4" width="5.2" height="2.5" fill="#117f8c"/>
<line x1="551.55" y1="388.7" x2="551.55" y2="393.5" stroke="#1a1a1a" stroke-width="1.5"/>
<rect x="548.95" y="388.7" width="5.2" height="3.0" fill="#117f8c"/>
<line x1="558.85" y1="360.6" x2="558.85" y2="389" stroke="#1a1a1a" stroke-width="1.5"/>
<rect x="556.25" y="370" width="5.2" height="19.0" fill="#117f8c"/>
<line x1="566.15" y1="361.3" x2="566.15" y2="397.8" stroke="#1a1a1a" stroke-width="1.5"/>
<rect x="563.55" y="370.5" width="5.2" height="21.9" fill="#c0282f"/>
<line x1="573.46" y1="377.8" x2="573.46" y2="386.7" stroke="#1a1a1a" stroke-width="1.5"/>
<rect x="570.86" y="382.5" width="5.2" height="4.2" fill="#117f8c"/>
<line x1="580.76" y1="375.9" x2="580.76" y2="419.4" stroke="#1a1a1a" stroke-width="1.5"/>
<rect x="578.16" y="382.2" width="5.2" height="23.1" fill="#c0282f"/>
<line x1="588.06" y1="377" x2="588.06" y2="410" stroke="#1a1a1a" stroke-width="1.5"/>
<rect x="585.46" y="381" width="5.2" height="24.3" fill="#117f8c"/>
<line x1="595.36" y1="378.7" x2="595.36" y2="384.8" stroke="#1a1a1a" stroke-width="1.5"/>
<line x1="592.76" y1="382.5" x2="597.96" y2="382.5" stroke="#1a1a1a" stroke-width="1.5"/>
<line x1="602.66" y1="331.6" x2="602.66" y2="381.8" stroke="#1a1a1a" stroke-width="1.5"/>
<rect x="600.06" y="333.5" width="5.2" height="48.3" fill="#117f8c"/>
<line x1="609.97" y1="325.3" x2="609.97" y2="364.1" stroke="#1a1a1a" stroke-width="1.5"/>
<rect x="607.37" y="333.5" width="5.2" height="30.6" fill="#c0282f"/>
<line x1="617.27" y1="355.2" x2="617.27" y2="360.6" stroke="#1a1a1a" stroke-width="1.5"/>
<line x1="614.67" y1="357.5" x2="619.87" y2="357.5" stroke="#1a1a1a" stroke-width="1.5"/>
<line x1="624.57" y1="345.3" x2="624.57" y2="393.5" stroke="#1a1a1a" stroke-width="1.5"/>
<rect x="621.97" y="357.5" width="5.2" height="10.1" fill="#c0282f"/>
<line x1="631.87" y1="326.5" x2="631.87" y2="367.6" stroke="#1a1a1a" stroke-width="1.5"/>
<rect x="629.27" y="345.3" width="5.2" height="22.3" fill="#117f8c"/>
<line x1="639.17" y1="318.2" x2="639.17" y2="351.9" stroke="#1a1a1a" stroke-width="1.5"/>
<rect x="636.57" y="328.4" width="5.2" height="17.4" fill="#117f8c"/>
<line x1="646.48" y1="306.5" x2="646.48" y2="337.8" stroke="#1a1a1a" stroke-width="1.5"/>
<rect x="643.88" y="318.2" width="5.2" height="10.6" fill="#117f8c"/>
<line x1="653.78" y1="280.5" x2="653.78" y2="327" stroke="#1a1a1a" stroke-width="1.5"/>
<rect x="651.18" y="287" width="5.2" height="33.0" fill="#117f8c"/>
<line x1="661.08" y1="289.7" x2="661.08" y2="295.5" stroke="#1a1a1a" stroke-width="1.5"/>
<rect x="658.48" y="289.7" width="5.2" height="2.5" fill="#117f8c"/>
<line x1="668.38" y1="285.7" x2="668.38" y2="329" stroke="#1a1a1a" stroke-width="1.5"/>
<rect x="665.78" y="289.2" width="5.2" height="32.0" fill="#c0282f"/>
<line x1="675.68" y1="306" x2="675.68" y2="330" stroke="#1a1a1a" stroke-width="1.5"/>
<rect x="673.08" y="310.7" width="5.2" height="11.8" fill="#117f8c"/>
<line x1="682.99" y1="277" x2="682.99" y2="320" stroke="#1a1a1a" stroke-width="1.5"/>
<rect x="680.39" y="284" width="5.2" height="28.0" fill="#117f8c"/>
<line x1="690.29" y1="243.7" x2="690.29" y2="291" stroke="#1a1a1a" stroke-width="1.5"/>
<rect x="687.69" y="258.2" width="5.2" height="26.2" fill="#117f8c"/>
<line x1="697.59" y1="255" x2="697.59" y2="277.9" stroke="#1a1a1a" stroke-width="1.5"/>
<rect x="694.99" y="258.2" width="5.2" height="19.7" fill="#c0282f"/>
<line x1="704.89" y1="274" x2="704.89" y2="288.4" stroke="#1a1a1a" stroke-width="1.5"/>
<rect x="702.29" y="274" width="5.2" height="8.3" fill="#c0282f"/>
<line x1="712.19" y1="259.5" x2="712.19" y2="291" stroke="#1a1a1a" stroke-width="1.5"/>
<rect x="709.59" y="263.4" width="5.2" height="19.7" fill="#117f8c"/>
<line x1="719.50" y1="214.8" x2="719.50" y2="274" stroke="#1a1a1a" stroke-width="1.5"/>
<rect x="716.90" y="217.5" width="5.2" height="46.5" fill="#117f8c"/>
<line x1="726.80" y1="191.2" x2="726.80" y2="220" stroke="#1a1a1a" stroke-width="1.5"/>
<rect x="724.20" y="202.5" width="5.2" height="16.8" fill="#117f8c"/>
<line x1="734.10" y1="199" x2="734.10" y2="228.8" stroke="#1a1a1a" stroke-width="1.5"/>
<rect x="731.50" y="202.5" width="5.2" height="2.5" fill="#c0282f"/>
<line x1="741.40" y1="162.3" x2="741.40" y2="204.3" stroke="#1a1a1a" stroke-width="1.5"/>
<rect x="738.80" y="182" width="5.2" height="22.3" fill="#117f8c"/>
<line x1="748.70" y1="184.1" x2="748.70" y2="190.4" stroke="#1a1a1a" stroke-width="1.5"/>
<line x1="746.10" y1="187.3" x2="751.30" y2="187.3" stroke="#1a1a1a" stroke-width="1.5"/>
<line x1="756.01" y1="179.4" x2="756.01" y2="235.8" stroke="#1a1a1a" stroke-width="1.5"/>
<rect x="753.41" y="186" width="5.2" height="36.4" fill="#c0282f"/>
<line x1="763.31" y1="189.2" x2="763.31" y2="228.6" stroke="#1a1a1a" stroke-width="1.5"/>
<rect x="760.71" y="192.7" width="5.2" height="29.7" fill="#117f8c"/>
<line x1="770.61" y1="188.1" x2="770.61" y2="216.8" stroke="#1a1a1a" stroke-width="1.5"/>
<rect x="768.01" y="192.9" width="5.2" height="3.5" fill="#c0282f"/>
<line x1="777.91" y1="147.3" x2="777.91" y2="197.5" stroke="#1a1a1a" stroke-width="1.5"/>
<rect x="775.31" y="147.3" width="5.2" height="49.5" fill="#117f8c"/>
<line x1="785.21" y1="119.3" x2="785.21" y2="155" stroke="#1a1a1a" stroke-width="1.5"/>
<rect x="782.61" y="140" width="5.2" height="8.3" fill="#117f8c"/>
<line x1="792.52" y1="135.3" x2="792.52" y2="164.7" stroke="#1a1a1a" stroke-width="1.5"/>
<rect x="789.92" y="140" width="5.2" height="12.5" fill="#c0282f"/>
<line x1="799.82" y1="141" x2="799.82" y2="180.5" stroke="#1a1a1a" stroke-width="1.5"/>
<rect x="797.22" y="148.7" width="5.2" height="3.8" fill="#117f8c"/>
</g>
<rect x="8" y="468" width="117" height="18" fill="#fff" fill-opacity="0.75"/>
<rect x="133" y="468" width="142" height="18" fill="#fff" fill-opacity="0.75"/>
<g fill="#8c8c8c" transform="translate(96.9,476.5)"><circle r="4.7"/><rect x="-1.3" y="-6.3" width="2.6" height="3" transform="rotate(0)"/><rect x="-1.3" y="-6.3" width="2.6" height="3" transform="rotate(45)"/><rect x="-1.3" y="-6.3" width="2.6" height="3" transform="rotate(90)"/><rect x="-1.3" y="-6.3" width="2.6" height="3" transform="rotate(135)"/><rect x="-1.3" y="-6.3" width="2.6" height="3" transform="rotate(180)"/><rect x="-1.3" y="-6.3" width="2.6" height="3" transform="rotate(225)"/><rect x="-1.3" y="-6.3" width="2.6" height="3" transform="rotate(270)"/><rect x="-1.3" y="-6.3" width="2.6" height="3" transform="rotate(315)"/><circle r="1.9" fill="#fff"/></g>
<path d="M111,472.6 L119,480.6 M119,472.6 L111,480.6" stroke="#8c8c8c" stroke-width="2.6"/>
<g fill="#8c8c8c" transform="translate(247.6,476.5)"><circle r="4.7"/><rect x="-1.3" y="-6.3" width="2.6" height="3" transform="rotate(0)"/><rect x="-1.3" y="-6.3" width="2.6" height="3" transform="rotate(45)"/><rect x="-1.3" y="-6.3" width="2.6" height="3" transform="rotate(90)"/><rect x="-1.3" y="-6.3" width="2.6" height="3" transform="rotate(135)"/><rect x="-1.3" y="-6.3" width="2.6" height="3" transform="rotate(180)"/><rect x="-1.3" y="-6.3" width="2.6" height="3" transform="rotate(225)"/><rect x="-1.3" y="-6.3" width="2.6" height="3" transform="rotate(270)"/><rect x="-1.3" y="-6.3" width="2.6" height="3" transform="rotate(315)"/><circle r="1.9" fill="#fff"/></g>
<path d="M261.8,472.6 L269.8,480.6 M269.8,472.6 L261.8,480.6" stroke="#8c8c8c" stroke-width="2.6"/>
<path d="M203.5,143.5 L212.5,143.5 L208,151 Z" fill="#118a11"/>
<path d="M737,148.5 L746,148.5 L741.5,156 Z" fill="#118a11"/>
<path d="M577,430 L586,430 L581.5,422.5 Z" fill="#ff1a1a"/>
<path d="M751,248 L760,248 L755.5,240.5 Z" fill="#ff1a1a"/>
<line x1="0" y1="79" x2="979" y2="79" stroke="#9a9a9a" stroke-width="2"/>
<line x1="0" y1="540.5" x2="919" y2="540.5" stroke="#a8a8a8" stroke-width="1"/>
<line x1="919.5" y1="79" x2="919.5" y2="667" stroke="#7a7a7a" stroke-width="1"/>
<line x1="0" y1="666.5" x2="920" y2="666.5" stroke="#6a6a6a" stroke-width="1"/>
<line x1="84" y1="569.5" x2="919" y2="569.5" stroke="#b5b5b5" stroke-width="1"/>
<line x1="0" y1="656.5" x2="919" y2="656.5" stroke="#b5b5b5" stroke-width="1"/>
<clipPath id="rsiabove"><rect x="0" y="540" width="919" height="29.5"/></clipPath>
<polygon points="0.0,566.1 3.7,564.5 11.6,584.5 18.8,575.8 24.9,577.2 32.7,579.8 40.9,583.3 47.4,583.3 55.2,589.0 62.3,605.4 69.9,612.9 76.6,601.3 84.2,589.0 90.9,592.7 99.1,592.7 106.2,587.0 113.4,581.9 120.5,573.7 127.7,564.1 134.8,563.1 142.4,565.5 150.2,557.4 156.9,580.2 164.0,574.1 171.6,571.1 179.2,577.4 185.9,573.7 193.9,563.6 200.7,561.0 208.2,587.6 215.7,595.3 222.6,593.2 229.7,595.3 237.6,590.8 244.7,631.2 251.8,612.5 259.1,620.4 266.6,620.4 273.7,639.7 281.2,646.2 288.7,652.6 295.5,653.7 302.6,654.8 310.1,649.8 317.6,630.1 324.7,621.1 332.0,614.0 339.5,606.9 347.0,594.7 354.1,590.8 361.2,627.5 369.1,620.4 376.2,618.9 383.0,618.7 390.6,613.4 397.5,615.5 405.0,617.2 412.5,616.8 420.0,613.6 426.9,620.4 434.0,621.1 441.5,616.8 449.0,607.6 456.1,593.2 463.4,584.6 471.1,603.9 477.9,616.6 485.5,615.5 493.4,615.5 501.1,617.7 508.0,639.1 515.5,636.1 522.6,621.9 529.9,621.5 537.6,625.4 544.9,624.3 551.9,623.2 559.0,615.5 566.3,623.2 573.4,619.4 580.9,627.5 587.8,617.7 595.5,617.7 602.8,600.2 610.2,611.5 617.4,609.2 624.8,613.0 632.2,605.2 639.9,598.9 646.6,595.1 654.0,584.9 661.5,586.1 668.7,601.1 675.8,598.0 683.3,589.4 690.4,581.1 697.9,590.6 705.1,592.8 712.5,586.7 719.9,573.7 727.1,569.7 734.3,570.8 741.7,565.4 749.1,568.8 756.3,587.6 763.5,579.8 770.9,581.6 778.3,568.8 785.5,567.0 792.7,573.3 800.1,572.6 800.1,569.5 0.0,569.5" fill="#aaaaaa" clip-path="url(#rsiabove)"/>
<polyline points="0.0,566.1 3.7,564.5 11.6,584.5 18.8,575.8 24.9,577.2 32.7,579.8 40.9,583.3 47.4,583.3 55.2,589.0 62.3,605.4 69.9,612.9 76.6,601.3 84.2,589.0 90.9,592.7 99.1,592.7 106.2,587.0 113.4,581.9 120.5,573.7 127.7,564.1 134.8,563.1 142.4,565.5 150.2,557.4 156.9,580.2 164.0,574.1 171.6,571.1 179.2,577.4 185.9,573.7 193.9,563.6 200.7,561.0 208.2,587.6 215.7,595.3 222.6,593.2 229.7,595.3 237.6,590.8 244.7,631.2 251.8,612.5 259.1,620.4 266.6,620.4 273.7,639.7 281.2,646.2 288.7,652.6 295.5,653.7 302.6,654.8 310.1,649.8 317.6,630.1 324.7,621.1 332.0,614.0 339.5,606.9 347.0,594.7 354.1,590.8 361.2,627.5 369.1,620.4 376.2,618.9 383.0,618.7 390.6,613.4 397.5,615.5 405.0,617.2 412.5,616.8 420.0,613.6 426.9,620.4 434.0,621.1 441.5,616.8 449.0,607.6 456.1,593.2 463.4,584.6 471.1,603.9 477.9,616.6 485.5,615.5 493.4,615.5 501.1,617.7 508.0,639.1 515.5,636.1 522.6,621.9 529.9,621.5 537.6,625.4 544.9,624.3 551.9,623.2 559.0,615.5 566.3,623.2 573.4,619.4 580.9,627.5 587.8,617.7 595.5,617.7 602.8,600.2 610.2,611.5 617.4,609.2 624.8,613.0 632.2,605.2 639.9,598.9 646.6,595.1 654.0,584.9 661.5,586.1 668.7,601.1 675.8,598.0 683.3,589.4 690.4,581.1 697.9,590.6 705.1,592.8 712.5,586.7 719.9,573.7 727.1,569.7 734.3,570.8 741.7,565.4 749.1,568.8 756.3,587.6 763.5,579.8 770.9,581.6 778.3,568.8 785.5,567.0 792.7,573.3 800.1,572.6" fill="none" stroke="#2a2a2a" stroke-width="1.5" stroke-linejoin="round"/>
<rect x="0" y="556" width="84" height="17" fill="#fff" fill-opacity="0.65"/>
<line x1="919" y1="143.5" x2="922" y2="143.5" stroke="#7a7a7a" stroke-width="1"/>
<line x1="919" y1="210.5" x2="922" y2="210.5" stroke="#7a7a7a" stroke-width="1"/>
<line x1="919" y1="278" x2="922" y2="278" stroke="#7a7a7a" stroke-width="1"/>
<line x1="919" y1="345.5" x2="922" y2="345.5" stroke="#7a7a7a" stroke-width="1"/>
<line x1="919" y1="414" x2="922" y2="414" stroke="#7a7a7a" stroke-width="1"/>
<line x1="919" y1="482.5" x2="922" y2="482.5" stroke="#7a7a7a" stroke-width="1"/>
<line x1="919" y1="547.5" x2="922" y2="547.5" stroke="#7a7a7a" stroke-width="1"/>
<line x1="919" y1="590" x2="922" y2="590" stroke="#7a7a7a" stroke-width="1"/>
<line x1="919" y1="611.5" x2="922" y2="611.5" stroke="#7a7a7a" stroke-width="1"/>
<line x1="919" y1="633.5" x2="922" y2="633.5" stroke="#7a7a7a" stroke-width="1"/>
<line x1="919" y1="655.5" x2="922" y2="655.5" stroke="#7a7a7a" stroke-width="1"/>
<line x1="15.5" y1="666" x2="15.5" y2="672" stroke="#6a6a6a" stroke-width="1"/>
<line x1="212.5" y1="666" x2="212.5" y2="672" stroke="#6a6a6a" stroke-width="1"/>
<line x1="394.5" y1="666" x2="394.5" y2="672" stroke="#6a6a6a" stroke-width="1"/>
<line x1="592.5" y1="666" x2="592.5" y2="672" stroke="#6a6a6a" stroke-width="1"/>
<line x1="789.5" y1="666" x2="789.5" y2="672" stroke="#6a6a6a" stroke-width="1"/>
<line x1="592.5" y1="672" x2="592.5" y2="686" stroke="#6a6a6a" stroke-width="1" stroke-dasharray="1,2"/>
<g fill="#8c8c8c" transform="translate(53.7,564.6)"><circle r="4.7"/><rect x="-1.3" y="-6.3" width="2.6" height="3" transform="rotate(0)"/><rect x="-1.3" y="-6.3" width="2.6" height="3" transform="rotate(45)"/><rect x="-1.3" y="-6.3" width="2.6" height="3" transform="rotate(90)"/><rect x="-1.3" y="-6.3" width="2.6" height="3" transform="rotate(135)"/><rect x="-1.3" y="-6.3" width="2.6" height="3" transform="rotate(180)"/><rect x="-1.3" y="-6.3" width="2.6" height="3" transform="rotate(225)"/><rect x="-1.3" y="-6.3" width="2.6" height="3" transform="rotate(270)"/><rect x="-1.3" y="-6.3" width="2.6" height="3" transform="rotate(315)"/><circle r="1.9" fill="#fff"/></g>
<path d="M68,560.6 L76,568.6 M76,560.6 L68,568.6" stroke="#8c8c8c" stroke-width="2.6"/>
<path d="M96.3,571 V559.5 M90.5,565 L96.3,559.2 L102.1,565" fill="none" stroke="#777" stroke-width="1.3"/>
</svg>
<div class="al" style="top:202.5px">2,750.00</div><div class="al" style="top:270px">2,700.00</div><div class="al" style="top:406px">2,600.00</div><div class="al" style="top:474.5px">2,550.00</div><div class="al" style="top:135.5px">2,800.00</div><div class="al" style="top:540.5px">80.0</div><div class="al" style="top:583px">60.0</div><div class="al" style="top:604.5px">50.0</div><div class="al" style="top:626.5px">40.0</div><div class="al" style="top:648.5px">30.0</div>
<svg class="tag" style="top:105px" width="70" height="18"><path d="M0,9 L9,0.5 L62,0.5 Q64,0.5 64,2.5 L64,15.5 Q64,17.5 62,17.5 L9,17.5 Z" fill="#ffdb00"/></svg><div class="tagt" style="top:106px;color:#111">2,821.50</div><svg class="tag" style="top:139.8px" width="70" height="18"><path d="M0,9 L9,0.5 L62,0.5 Q64,0.5 64,2.5 L64,15.5 Q64,17.5 62,17.5 L9,17.5 Z" fill="#6262ae"/></svg><div class="tagt" style="top:140.8px;color:#fff">2,795.99</div><svg class="tag" style="top:220.8px" width="70" height="18"><path d="M0,9 L9,0.5 L62,0.5 Q64,0.5 64,2.5 L64,15.5 Q64,17.5 62,17.5 L9,17.5 Z" fill="#1ef0c0"/></svg><div class="tagt" style="top:221.8px;color:#111">2,735.84</div><svg class="tag" style="top:336.8px" width="70" height="18"><path d="M0,9 L9,0.5 L62,0.5 Q64,0.5 64,2.5 L64,15.5 Q64,17.5 62,17.5 L9,17.5 Z" fill="#ffdb00"/></svg><div class="tagt" style="top:337.8px;color:#111">2,650.18</div>
<svg class="tag" style="top:564.2px;left:910.3px" width="42" height="17"><path d="M0,8.3 L8,0 L39,0 Q41,0 41,2 L41,14.5 Q41,16.5 39,16.5 L8,16.5 Z" fill="#000"/></svg>
<div class="tagt" style="top:565px;left:925.5px;color:#fff;font-size:12px;letter-spacing:-0.1px;-webkit-text-stroke:0.3px #fff">68.7</div>
<div class="lbl" style="left:9px;top:469px"><b>VWAP</b> 20 1 2 3</div>
<div class="lbl" style="left:135px;top:469px"><b>AUTO TREND</b> 3 3 1</div>
<div class="lbl" style="left:9px;top:557px"><b>RSI</b> 14</div>
<div class="dl" style="left:5px">Oct</div>
<div class="dl" style="left:201px">Nov</div>
<div class="dl" style="left:382px">Dec</div>
<div class="dl" style="left:779px">Feb</div>
<div class="dl" style="left:579px;top:688px">2025</div>
<svg class="cal" style="left:1.0px;top:704px" width="20" height="17"><rect x="1" y="3.5" width="18" height="12" rx="2.5" fill="none" stroke="#a8a8a8" stroke-width="1.6"/><line x1="6.5" y1="1.5" x2="6.5" y2="4" stroke="#a8a8a8" stroke-width="1.3"/><line x1="13.5" y1="1.5" x2="13.5" y2="4" stroke="#a8a8a8" stroke-width="1.3"/><text x="10" y="14" text-anchor="middle" font-family="Liberation Sans" font-size="10" fill="#c4c4c4">4</text></svg><svg class="cal" style="left:44.8px;top:704px" width="20" height="17"><rect x="1" y="3.5" width="18" height="12" rx="2.5" fill="none" stroke="#a8a8a8" stroke-width="1.6"/><line x1="6.5" y1="1.5" x2="6.5" y2="4" stroke="#a8a8a8" stroke-width="1.3"/><line x1="13.5" y1="1.5" x2="13.5" y2="4" stroke="#a8a8a8" stroke-width="1.3"/><text x="10" y="14" text-anchor="middle" font-family="Liberation Sans" font-size="10" fill="#c4c4c4">5</text></svg><svg class="cal" style="left:88.7px;top:704px" width="20" height="17"><rect x="1" y="3.5" width="18" height="12" rx="2.5" fill="none" stroke="#a8a8a8" stroke-width="1.6"/><line x1="6.5" y1="1.5" x2="6.5" y2="4" stroke="#a8a8a8" stroke-width="1.3"/><line x1="13.5" y1="1.5" x2="13.5" y2="4" stroke="#a8a8a8" stroke-width="1.3"/><text x="10" y="14" text-anchor="middle" font-family="Liberation Sans" font-size="10" fill="#c4c4c4">6</text></svg><svg class="cal" style="left:176.3px;top:704px" width="20" height="17"><rect x="1" y="3.5" width="18" height="12" rx="2.5" fill="none" stroke="#a8a8a8" stroke-width="1.6"/><line x1="6.5" y1="1.5" x2="6.5" y2="4" stroke="#a8a8a8" stroke-width="1.3"/><line x1="13.5" y1="1.5" x2="13.5" y2="4" stroke="#a8a8a8" stroke-width="1.3"/><text x="10" y="14" text-anchor="middle" font-family="Liberation Sans" font-size="10" fill="#c4c4c4">4</text></svg><svg class="cal" style="left:220.1px;top:704px" width="20" height="17"><rect x="1" y="3.5" width="18" height="12" rx="2.5" fill="none" stroke="#a8a8a8" stroke-width="1.6"/><line x1="6.5" y1="1.5" x2="6.5" y2="4" stroke="#a8a8a8" stroke-width="1.3"/><line x1="13.5" y1="1.5" x2="13.5" y2="4" stroke="#a8a8a8" stroke-width="1.3"/><text x="10" y="14" text-anchor="middle" font-family="Liberation Sans" font-size="10" fill="#c4c4c4">5</text></svg><svg class="cal" style="left:264.0px;top:704px" width="20" height="17"><rect x="1" y="3.5" width="18" height="12" rx="2.5" fill="none" stroke="#a8a8a8" stroke-width="1.6"/><line x1="6.5" y1="1.5" x2="6.5" y2="4" stroke="#a8a8a8" stroke-width="1.3"/><line x1="13.5" y1="1.5" x2="13.5" y2="4" stroke="#a8a8a8" stroke-width="1.3"/><text x="10" y="14" text-anchor="middle" font-family="Liberation Sans" font-size="10" fill="#c4c4c4">8</text></svg><svg class="cal" style="left:307.8px;top:704px" width="20" height="17"><rect x="1" y="3.5" width="18" height="12" rx="2.5" fill="none" stroke="#a8a8a8" stroke-width="1.6"/><line x1="6.5" y1="1.5" x2="6.5" y2="4" stroke="#a8a8a8" stroke-width="1.3"/><line x1="13.5" y1="1.5" x2="13.5" y2="4" stroke="#a8a8a8" stroke-width="1.3"/><text x="10" y="14" text-anchor="middle" font-family="Liberation Sans" font-size="10" fill="#c4c4c4">4</text></svg><svg class="flag" style="left:352.1px;top:703.5px" width="21" height="16"><rect width="21" height="16" fill="#fbe3e4"/><rect x="0" y="0.00" width="21" height="1.23" fill="#f4a3a8"/><rect x="0" y="2.46" width="21" height="1.23" fill="#f4a3a8"/><rect x="0" y="4.92" width="21" height="1.23" fill="#f4a3a8"/><rect x="0" y="7.38" width="21" height="1.23" fill="#f4a3a8"/><rect x="0" y="9.85" width="21" height="1.23" fill="#f4a3a8"/><rect x="0" y="12.31" width="21" height="1.23" fill="#f4a3a8"/><rect x="0" y="14.77" width="21" height="1.23" fill="#f4a3a8"/><rect width="10" height="8.6" fill="#8f9dc0"/></svg><svg class="cal" style="left:395.5px;top:704px" width="20" height="17"><rect x="1" y="3.5" width="18" height="12" rx="2.5" fill="none" stroke="#a8a8a8" stroke-width="1.6"/><line x1="6.5" y1="1.5" x2="6.5" y2="4" stroke="#a8a8a8" stroke-width="1.3"/><line x1="13.5" y1="1.5" x2="13.5" y2="4" stroke="#a8a8a8" stroke-width="1.3"/><text x="10" y="14" text-anchor="middle" font-family="Liberation Sans" font-size="10" fill="#c4c4c4">4</text></svg><svg class="cal" style="left:439.3px;top:704px" width="20" height="17"><rect x="1" y="3.5" width="18" height="12" rx="2.5" fill="none" stroke="#a8a8a8" stroke-width="1.6"/><line x1="6.5" y1="1.5" x2="6.5" y2="4" stroke="#a8a8a8" stroke-width="1.3"/><line x1="13.5" y1="1.5" x2="13.5" y2="4" stroke="#a8a8a8" stroke-width="1.3"/><text x="10" y="14" text-anchor="middle" font-family="Liberation Sans" font-size="10" fill="#c4c4c4">4</text></svg><svg class="cal" style="left:483.1px;top:704px" width="20" height="17"><rect x="1" y="3.5" width="18" height="12" rx="2.5" fill="none" stroke="#a8a8a8" stroke-width="1.6"/><line x1="6.5" y1="1.5" x2="6.5" y2="4" stroke="#a8a8a8" stroke-width="1.3"/><line x1="13.5" y1="1.5" x2="13.5" y2="4" stroke="#a8a8a8" stroke-width="1.3"/><text x="10" y="14" text-anchor="middle" font-family="Liberation Sans" font-size="10" fill="#c4c4c4">10</text></svg><svg class="cal" style="left:527.0px;top:704px" width="20" height="17"><rect x="1" y="3.5" width="18" height="12" rx="2.5" fill="none" stroke="#a8a8a8" stroke-width="1.6"/><line x1="6.5" y1="1.5" x2="6.5" y2="4" stroke="#a8a8a8" stroke-width="1.3"/><line x1="13.5" y1="1.5" x2="13.5" y2="4" stroke="#a8a8a8" stroke-width="1.3"/><text x="10" y="14" text-anchor="middle" font-family="Liberation Sans" font-size="10" fill="#c4c4c4">2</text></svg><svg class="flag" style="left:571.3px;top:703.5px" width="21" height="16"><rect width="21" height="16" fill="#fbe3e4"/><rect x="0" y="0.00" width="21" height="1.23" fill="#f4a3a8"/><rect x="0" y="2.46" width="21" height="1.23" fill="#f4a3a8"/><rect x="0" y="4.92" width="21" height="1.23" fill="#f4a3a8"/><rect x="0" y="7.38" width="21" height="1.23" fill="#f4a3a8"/><rect x="0" y="9.85" width="21" height="1.23" fill="#f4a3a8"/><rect x="0" y="12.31" width="21" height="1.23" fill="#f4a3a8"/><rect x="0" y="14.77" width="21" height="1.23" fill="#f4a3a8"/><rect width="10" height="8.6" fill="#8f9dc0"/></svg><svg class="cal" style="left:614.6px;top:704px" width="20" height="17"><rect x="1" y="3.5" width="18" height="12" rx="2.5" fill="none" stroke="#a8a8a8" stroke-width="1.6"/><line x1="6.5" y1="1.5" x2="6.5" y2="4" stroke="#a8a8a8" stroke-width="1.3"/><line x1="13.5" y1="1.5" x2="13.5" y2="4" stroke="#a8a8a8" stroke-width="1.3"/><text x="10" y="14" text-anchor="middle" font-family="Liberation Sans" font-size="10" fill="#c4c4c4">3</text></svg><svg class="cal" style="left:658.4px;top:704px" width="20" height="17"><rect x="1" y="3.5" width="18" height="12" rx="2.5" fill="none" stroke="#a8a8a8" stroke-width="1.6"/><line x1="6.5" y1="1.5" x2="6.5" y2="4" stroke="#a8a8a8" stroke-width="1.3"/><line x1="13.5" y1="1.5" x2="13.5" y2="4" stroke="#a8a8a8" stroke-width="1.3"/><text x="10" y="14" text-anchor="middle" font-family="Liberation Sans" font-size="10" fill="#c4c4c4">9</text></svg><svg class="flag" style="left:702.3px;top:703.5px" width="22" height="16"><rect width="22" height="16" fill="#7f8fb5"/><path d="M0,0 L22,16 M22,0 L0,16" stroke="#fff" stroke-width="3.2"/><path d="M0,0 L22,16 M22,0 L0,16" stroke="#ec9aa0" stroke-width="1.2"/><path d="M11,0 V16 M0,8 H22" stroke="#fff" stroke-width="5"/><path d="M11,0 V16 M0,8 H22" stroke="#ec8f96" stroke-width="3"/></svg><svg class="cal" style="left:746.1px;top:704px" width="20" height="17"><rect x="1" y="3.5" width="18" height="12" rx="2.5" fill="none" stroke="#a8a8a8" stroke-width="1.6"/><line x1="6.5" y1="1.5" x2="6.5" y2="4" stroke="#a8a8a8" stroke-width="1.3"/><line x1="13.5" y1="1.5" x2="13.5" y2="4" stroke="#a8a8a8" stroke-width="1.3"/><text x="10" y="14" text-anchor="middle" font-family="Liberation Sans" font-size="10" fill="#c4c4c4">6</text></svg><svg class="cal" style="left:789.9px;top:704px" width="20" height="17"><rect x="1" y="3.5" width="18" height="12" rx="2.5" fill="none" stroke="#a8a8a8" stroke-width="1.6"/><line x1="6.5" y1="1.5" x2="6.5" y2="4" stroke="#a8a8a8" stroke-width="1.3"/><line x1="13.5" y1="1.5" x2="13.5" y2="4" stroke="#a8a8a8" stroke-width="1.3"/><text x="10" y="14" text-anchor="middle" font-family="Liberation Sans" font-size="10" fill="#c4c4c4">7</text></svg>
</body></html>
